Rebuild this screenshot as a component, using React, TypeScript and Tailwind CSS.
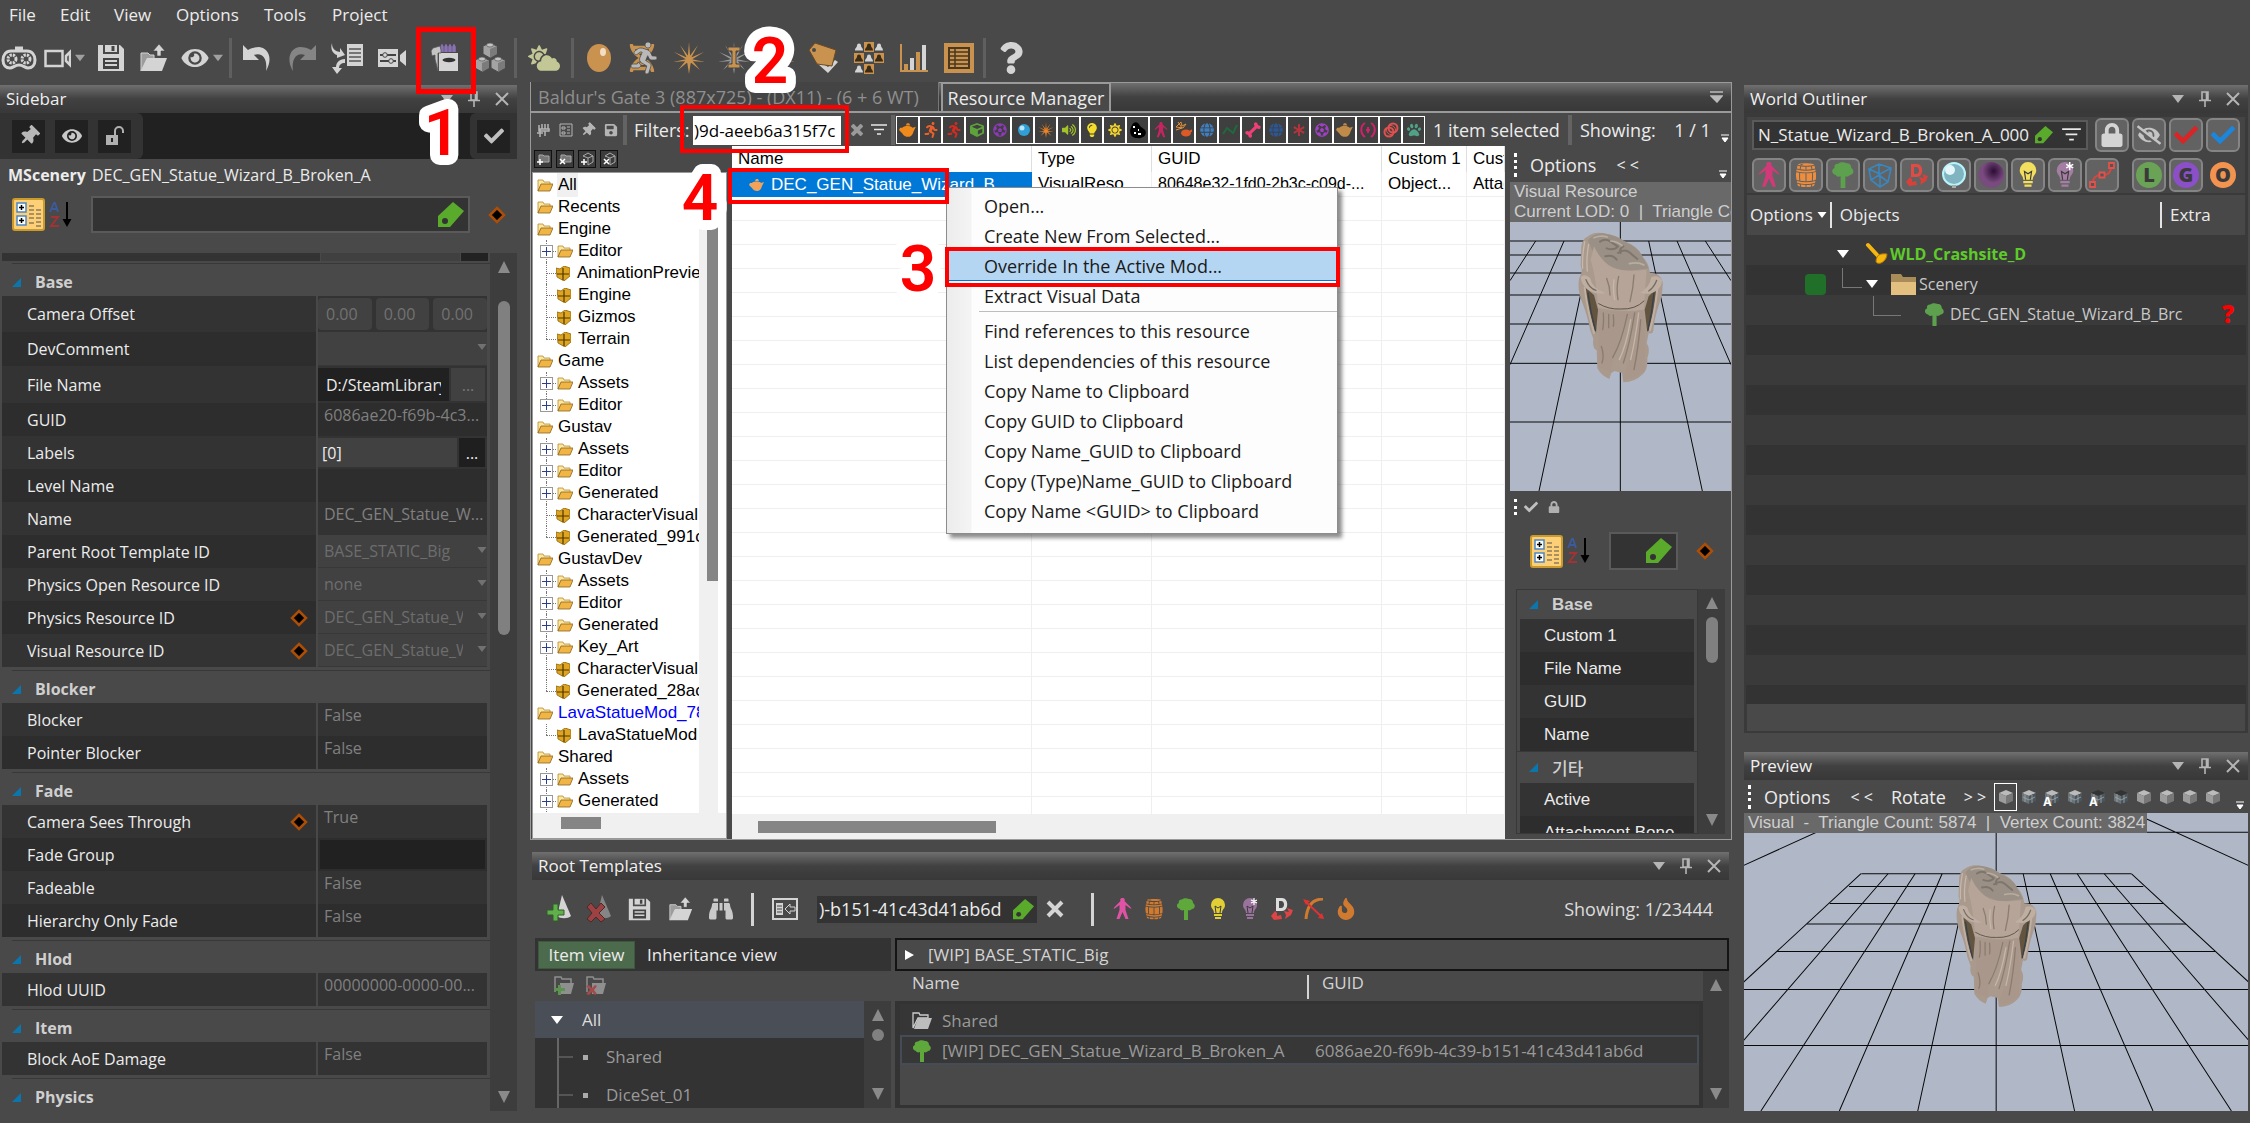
import React from "react";
import {
  FaAsterisk, FaBinoculars, FaBone, FaCheck, FaCloudSun, FaCube, FaDna, FaEye, FaEyeSlash, FaFire, FaFutbol, FaGlobe,
  FaLightbulb, FaLock, FaQuestion, FaRunning, FaSave, FaSun, FaThumbtack, FaUnlock, FaVolumeUp, FaPaw,
} from "react-icons/fa";
import { GiBarrel } from "react-icons/gi";

type Kids = { children?: React.ReactNode };

/* ---------- icons ---------- */

function Svg({ children, className = "size-7", box = "0 0 28 28" }: Kids & { className?: string; box?: string }) {
  return (
    <svg viewBox={box} className={`${className} shrink-0`} fill="none" aria-hidden="true">
      {children}
    </svg>
  );
}

const Down = ({ className = "h-2 w-3 text-[#b5b5b5]" }: { className?: string }) => (
  <Svg box="0 0 12 8" className={className}><path d="M0 0h12L6 8z" fill="currentColor" /></Svg>
);
const Up = () => <Svg box="0 0 12 12" className="size-3 text-[#8a8a8a]"><path d="M0 12h12L6 0z" fill="currentColor" /></Svg>;
const DownBig = () => <Svg box="0 0 12 12" className="size-3 text-[#8a8a8a]"><path d="M0 0h12L6 12z" fill="currentColor" /></Svg>;

const Gamepad = () => (
  <Svg className="h-7 w-9" box="0 0 36 28">
    <path d="M10 7h16c5 0 8 4 8 9s-3 8-7 8c-3 0-5-3-9-3s-6 3-9 3c-4 0-7-3-7-8s3-9 8-9zM14 4h8" stroke="#d4d4d4" strokeWidth="3" />
    <circle cx="11" cy="15" r="4" stroke="#d4d4d4" strokeWidth="3" strokeDasharray="2.2 1" />
    <circle cx="25" cy="15" r="4" stroke="#d4d4d4" strokeWidth="3" strokeDasharray="2.2 1" />
  </Svg>
);
const Camera = () => (
  <Svg className="h-7 w-[27px]" box="0 0 27 28">
    <path d="M1.500 7h17v15h-17zM22 12l4-4v13l-4-4z" stroke="#d4d4d4" strokeWidth="2.500" />
  </Svg>
);
const Floppy = ({ className = "size-7" }: { className?: string }) => (
  <Svg className={className}>
    <path d="M1 1h5v9h16V1h1l4 4v22H1z" fill="#d4d4d4" />
    <path d="M8 1h12v7H8z" fill="#d4d4d4" /><path d="M14.500 2h3v5h-3z" fill="#444" />
    <path d="M6 14h16v11H6z" fill="#444" /><path d="M8 16h12v2H8zm0 4h12v2H8z" fill="#d4d4d4" />
  </Svg>
);
const OpenUp = ({ className = "size-7" }: { className?: string }) => (
  <Svg className={className}>
    <path d="M1 27V9h7l2 2h4v4H7z" fill="#9c9c9c" stroke="#d4d4d4" />
    <path d="M7 14h20l-5 13H1z" fill="#d4d4d4" />
    <path d="M17 12V7h-4l6-7 6 7h-4v5z" fill="#d4d4d4" stroke="#444" strokeWidth=".6" />
  </Svg>
);
const Undo = ({ flip = false }: { flip?: boolean }) => (
  <Svg className="h-7 w-8" box="0 0 32 28">
    <path transform={flip ? "translate(32 0) scale(-1 1)" : undefined} d="M2 1v15h16l-5-5c7-3 14 2 12 16 7-12 3-23-7-24-4 0-8 1-11 3z" fill={flip ? "#858585" : "#d4d4d4"} />
  </Svg>
);
const LinkDoc = () => (
  <Svg className="h-8 w-[34px]" box="0 0 34 32">
    <path d="M17 2h16v22H17z" fill="#d4d4d4" />
    <path d="M19 7h12M19 11h12M19 15h12M19 19h12" stroke="#555" strokeWidth="1.500" />
    <path d="M2 1c0 5 2 8 8 9V6l5 7-8 3v-3C3 12 0 7 2 1zM15 17c-6 0-9 4-9 8H2l5 7 5-6H9c0-3 2-5 6-5z" fill="#d4d4d4" />
  </Svg>
);
const CamSettings = () => (
  <Svg>
    <path d="M0 5h20v18H0zM22 11l6-5v16l-6-5z" fill="#d4d4d4" />
    <path d="M2 11h16M2 17h16" stroke="#444" strokeWidth="1.800" />
    <circle cx="7" cy="11" r="2.300" fill="#d4d4d4" stroke="#444" /><circle cx="13" cy="17" r="2.300" fill="#d4d4d4" stroke="#444" />
  </Svg>
);
const Crayons = () => (
  <Svg>
    <path d="M10 8V3l1-2 1 2v5M14 8V3l1-2 1 2v5M18 8V3l1-2 1 2v5M22 8V3l1-2 1 2v5" fill="#8a72b4" stroke="#8a72b4" strokeWidth="1.500" />
    <path d="M8 9h19v18H8z" fill="#d4d4d4" />
    <path d="M9 2L2 4 0 7l1 5 3-1v4l3 12V9h3V6z" fill="#c4c4c4" stroke="#555" strokeWidth=".8" />
    <ellipse cx="18" cy="16" rx="6.500" ry="2.200" fill="#333" />
  </Svg>
);
const Brick = ({ x, y }: { x: number; y: number }) => (
  <g transform={`translate(${x} ${y})`}>
    <path d="M0 4l7-3 7 3v8l-7 4-7-4z" fill="#a3a3a3" stroke="#4a4a4a" /><path d="M7 7v9l7-4V4z" fill="#7b7b7b" />
    <ellipse cx="7" cy="3" rx="3.500" ry="2" fill="#c4c4c4" stroke="#555" strokeWidth=".7" />
  </g>
);
const Bricks = () => <Svg className="h-8 w-[30px]" box="0 0 30 32"><Brick x={8} y={0} /><Brick x={0} y={14} /><Brick x={16} y={14} /></Svg>;

const Burst = ({ color = "#c9924f", className = "size-8", letter = false }: { color?: string; className?: string; letter?: boolean }) => (
  <Svg className={className} box="0 0 32 32">
    <path
      d="M16 0l1.200 15h-2.400zM25 3l-7 13-2-1zM7 3l9 12-2 1zM31 10l-13 8-1-2zM1 10l14 6-1 2zM32 20l-14-1v-2zM0 20l14-3v2zM27 28l-11-9 2-2zM5 28l9-11 2 2zM16 32l-2-13h4z"
      fill={letter ? "#999" : color}
    />
    <circle cx="16" cy="18" r="3.500" fill={letter ? "#999" : color} />
    {letter && <path d="M10 5h12v4h-4v13h4v4H10v-4h4V9h-4z" fill={color} stroke="#494949" />}
  </Svg>
);
const Sphere = () => (
  <Svg className="h-[30px] w-[26px]" box="0 0 26 30">
    <ellipse cx="13" cy="15" rx="12" ry="14" fill="#c9924f" /><ellipse cx="17" cy="9" rx="3" ry="4" fill="#f3dec3" />
  </Svg>
);
const TagPaper = () => (
  <Svg className="h-8 w-[31px]" box="0 0 31 32">
    <path d="M10 22l10 9 10-11-3-2-7 7-7-5z" fill="#d4d4d4" />
    <path d="M1 8l6-7 21 7-4 16-15-2z" fill="#c9924f" stroke="#6b4a24" /><circle cx="6" cy="8" r="2" fill="#494949" />
  </Svg>
);
const People = () => (
  <Svg className="h-8 w-[30px]" box="0 0 30 32">
    {[0, 1, 2].flatMap((r) => [0, 1, 2].map((c) => {
      const odd = (r + c) % 2 === 1;
      if (r === 2 && c === 2) return null;
      return (
        <g key={`${r}${c}`} transform={`translate(${c * 10} ${r * 11})`}>
          {odd && <path d="M0 0h10v10H0z" fill="#c9924f" />}
          <path d="M5 1.500a2 2 0 012 2c0 2 2 2 2 5H1c0-3 2-3 2-5a2 2 0 012-2z" fill={odd ? "#3b2c18" : "#d4d4d4"} />
        </g>
      );
    }))}
  </Svg>
);
const Chart = () => (
  <Svg>
    <path d="M1 0v27h27" stroke="#c9924f" strokeWidth="2" />
    <path d="M4 20h4v6H4zM16 8h4v18h-4z" fill="#c9924f" /><path d="M10 14h4v12h-4zM22 1h4v25h-4z" fill="#d4d4d4" />
  </Svg>
);
const Ledger = () => (
  <Svg className="size-[30px]" box="0 0 30 30">
    <path d="M0 0h30v30H0z" fill="#c9924f" /><path d="M4 4h22v22H4z" fill="#4a3820" />
    <path d="M6 6h18v18H6z" fill="#c9924f" /><path d="M6 9h18M6 13h18M6 17h18M6 21h18M11 6v18" stroke="#4a3820" strokeWidth="1.500" />
  </Svg>
);
const Pushpin = () => (
  <Svg box="0 0 14 16" className="h-4 w-3.5"><path d="M4 1h6v8H4zM1 9.500h12M7 10v6M8.500 1v8" stroke="#b5b5b5" strokeWidth="1.600" /></Svg>
);
const Cross = () => <Svg box="0 0 14 14" className="size-3.5"><path d="M1 1l12 12M13 1L1 13" stroke="#b5b5b5" strokeWidth="2" /></Svg>;
const Categorized = () => (
  <Svg className="size-[33px]" box="0 0 33 33">
    <rect x="1" y="1" width="31" height="31" rx="2" fill="#fdd078" stroke="#c99a2c" strokeWidth="2" />
    {[5, 18].map((y) => (
      <g key={y}><path d={`M5 ${y}h9v9H5z`} fill="#fff" stroke="#4a86c7" strokeWidth="1.500" /><path d={`M7 ${y + 4.5}h5M9.500 ${y + 2}v5`} stroke="#000" strokeWidth="1.500" /></g>
    ))}
    <path d="M17 8h5M17 12h5M17 16h5M17 20h5M17 25h5M24 12h5M24 16h5M24 20h5M24 24h5M24 28h5" stroke="#8d7b55" strokeWidth="1.500" />
  </Svg>
);
const SortAZ = () => (
  <Svg className="h-7 w-[25px]" box="0 0 25 28">
    <path d="M1 11L5 2h1l3 9M3 8h5" stroke="#3c5a9e" strokeWidth="1.800" /><path d="M2 16h7L2 25h8" stroke="#a03434" strokeWidth="2" />
    <path d="M18 1v22" stroke="#000" strokeWidth="2" /><path d="M13.500 18h9L18 26z" fill="#000" />
  </Svg>
);
const GreenTag = ({ className = "size-[26px]" }: { className?: string }) => (
  <Svg box="0 0 26 26" className={className}>
    <path d="M15 0l11 9-14 16H0V14z" fill="#5aab2c" /><circle cx="7" cy="19" r="3" fill="#333" />
  </Svg>
);
const Diamond = () => (
  <Svg box="0 0 18 18" className="size-[18px]"><path d="M9 2l7 7-7 7-7-7z" fill="#000" stroke="#ad4e07" strokeWidth="2.500" /></Svg>
);
const FilterLines = ({ className = "h-3 w-4" }: { className?: string }) => (
  <Svg box="0 0 16 12" className={className}><path d="M0 1h16M3 5.500h10M6 10h4" stroke="#e8e8e8" strokeWidth="1.500" /></Svg>
);
const Teapot = ({ className = "size-4", color = "#ef8a1c" }: { className?: string; color?: string }) => (
  <Svg box="0 0 16 16" className={className}>
    <path d="M3 6c1-2 8-2 9 0l3-1-2 4c-1 4-3 5-5 5s-4-1-5-3L0 8l1-2z" fill={color} /><path d="M6 4h4l-1-2H7z" fill={color} />
  </Svg>
);
const Folder = () => (
  <Svg box="0 0 16 14" className="h-3.5 w-4">
    <path d="M1 13V2h5l1 2h6v3H4z" fill="#fbe7a2" stroke="#b98a2a" strokeWidth=".8" />
    <path d="M4 6h12l-3 7H1z" fill="#f0b545" stroke="#8a6420" strokeWidth=".8" />
  </Svg>
);
const Pack = () => (
  <Svg box="0 0 14 15" className="h-[15px] w-3.5">
    <path d="M0 2l4 1 4-3 6 2v8l-6 5-7-4z" fill="#e0a520" stroke="#8c6206" strokeWidth=".8" />
    <path d="M7 2v12M1 8h12" stroke="#4c3702" strokeWidth="1.200" />
  </Svg>
);
const TreeIcon = ({ color, className = "h-[22px] w-[18px]" }: { color: string; className?: string }) => (
  <Svg box="0 0 18 22" className={className}>
    <path d="M5 1.500C7-.3 10 0 12 1c3 0 4 2 4 4 3 2 2 6-1 6-1 1-3 2-4 1v10H7V12c-2 1-4 0-4-1-4-1-4-5-1-6-1-2 1-4 3-3.500z" fill={color} />
  </Svg>
);
const Person = ({ color, className = "h-[22px] w-[19px]" }: { color: string; className?: string }) => (
  <Svg box="0 0 19 22" className={className}>
    <path d="M9.500 0a2 2 0 012 3l6 6 1 2-2-1-4-3v5l3 9h-3l-3-7-3 7h-3l3-9V7l-4 3-2 1 1-2 6-6a2 2 0 012-3z" fill={color} />
  </Svg>
);
const Bulb = ({ color, star = false, className = "h-[22px] w-4" }: { color: string; star?: boolean; className?: string }) => (
  <Svg box="0 0 16 22" className={className}>
    <path d="M8 0a7 7 0 017 7c0 4-3 4-3 8H4c0-4-3-4-3-8a7 7 0 017-7zM4 16h8v2H4zM5 19h6v2H5z" fill={color} />
    <path d="M6 15l-1-7 3 2 3-2-1 7" stroke="#3b3b3b" />
    {star && <path d="M12 0v7M9 2l6 3M15 2L9 5" stroke="#fff" strokeWidth="1.200" />}
  </Svg>
);
const Decal = ({ color = "#d44", letter = "#ddd" }: { color?: string; letter?: string }) => (
  <Svg box="0 0 24 24" className="size-6">
    <path d="M6 1h6c7 0 7 13 0 13H6zm3 3v7h2c4 0 4-7 0-7z" fill={letter} fillRule="evenodd" />
    <path d="M5 14l-4 5 3 4 8-1-1-4-4 1v-3zM14 14l5 1-2-4 6 2-2 5-6 4 1-4z" fill={color} />
  </Svg>
);
const Curve = () => (
  <Svg box="0 0 26 26" className="size-[26px]">
    <path d="M4 21c0-6 3-8 9-8s9-2 9-8" stroke="#d8473f" strokeWidth="2" />
    <path d="M1 20h5v5H1zM10.500 10.500h5v5h-5zM20 1h5v5h-5z" fill="#555" stroke="#e2524a" strokeWidth="1.800" />
  </Svg>
);
const Arrow = () => (
  <Svg box="0 0 22 22" className="size-[22px]">
    <path d="M20 1C10 1 4 8 3 21" stroke="#cf7a2e" strokeWidth="3" /><path d="M2 3l18 17" stroke="#d33" strokeWidth="2" /><path d="M0 1l7 2-4 4zM21 21l-6-1 4-5z" fill="#d33" />
  </Svg>
);
const Cone = ({ add = false }: { add?: boolean }) => (
  <Svg className="h-7 w-[26px]" box="0 0 26 28">
    <path d="M16 0l9 21c-3 3-11 3-14 0z" fill={add ? "#d4d4d4" : "#858585"} />
    {add ? <path d="M7 9h5v6h6v5h-6v6H7v-6H1v-5h6z" fill="#5fb04a" stroke="#335c28" /> : <path d="M1 12l4-4 5 6 5-6 4 4-6 6 6 6-4 3-5-5-5 5-4-3 5-6z" fill="#9c4242" stroke="#4e2828" />}
  </Svg>
);
const FolderOp = ({ add = false }: { add?: boolean }) => (
  <Svg className="h-5 w-[22px]" box="0 0 22 20">
    <path d="M2 16V1h6l1 2h9v4" stroke="#8f8f8f" strokeWidth="1.500" /><path d="M7 7h14l-3 11H7z" fill="#8f8f8f" />
    {add ? <path d="M5 9h3v3h4v3H8v4H5v-4H1v-3h4z" fill="#5a9450" /> : <path d="M1 10l3-1 3 3 3-3 2 1-3 4 3 4-2 1-3-3-3 3-3-1 4-4z" fill="#a34a4a" />}
  </Svg>
);
const WireCube = ({ color }: { color: string }) => (
  <Svg box="0 0 26 26" className="size-[26px]"><path d="M2 7l10-5 12 4-3 14-8 5L4 18zM2 7l11 5 11-6M13 12v13M12 2v11l-8 5M12 13l9 7" stroke={color} strokeWidth="1.600" /></Svg>
);
const Plug = () => (
  <Svg box="0 0 14 14" className="size-3.5"><path d="M3 2v4M6 1v5M9 1v5M12 1v5M3 6h10v2H3zM9 8v5M4 6v8M1 10h6" stroke="#b5b5b5" strokeWidth="1.500" /></Svg>
);
const Grip = () => <span className="h-6 w-1 shrink-0 border-l-3 border-dotted border-white" />;
const Overflow = ({ className = "" }: { className?: string }) => (
  <Svg box="0 0 8 8" className={`size-2 self-end ${className}`}><path d="M0 1h8M1 4h6L4 8z" stroke="#fff" fill="#fff" /></Svg>
);

/* ---------- shared pieces ---------- */

function TitleBar({ title }: { title: string }) {
  return (
    <header className="flex h-7 shrink-0 items-center gap-3.5 bg-linear-to-b from-[#707070] via-[#414141] to-[#383838] pr-2 pl-1.5 text-[#f0f0f0]">
      <h2 className="flex-1">{title}</h2>
      <button aria-label={`${title} menu`}><Down /></button>
      <button aria-label={`Pin ${title}`}><Pushpin /></button>
      <button aria-label={`Close ${title}`}><Cross /></button>
    </header>
  );
}

/* Numbered step marker with a thick rounded outline. */
const Digit = ({ className, children }: Kids & { className: string }) => (
  <svg viewBox="0 0 56 66" className={`pointer-events-none absolute z-30 h-[66px] w-14 overflow-visible font-[Roboto,sans-serif] text-[64px] font-semibold ${className}`}>
    <text x="28" y="55" textAnchor="middle" fill="#f00" stroke="#fff" strokeWidth="20" strokeLinejoin="round" paintOrder="stroke">{children}</text>
  </svg>
);
const RedBox = ({ className }: { className: string }) => <span className={`pointer-events-none absolute z-20 border-4 border-[#f00] ${className}`} />;

function Scroll({ thumb, className = "" }: { thumb: string; className?: string }) {
  return (
    <div className={`flex shrink-0 flex-col items-center bg-[#3d3d3d] py-2 ${className}`}>
      <Up />
      <span className={`mt-2 w-3 rounded-full bg-[#808080] ${thumb}`} />
      <span className="flex-1" />
      <DownBig />
    </div>
  );
}

/* ---------- menu and toolbar ---------- */

const MENU = [["File", "w-[51px]"], ["Edit", "w-[54px]"], ["View", "w-[62px]"], ["Options", "w-[88px]"], ["Tools", "w-[68px]"], ["Project", "w-20"]];

const Tool = ({ name, children, className = "w-[45px]" }: Kids & { name: string; className?: string }) => (
  <button aria-label={name} className={`relative flex h-full shrink-0 items-center justify-center gap-1 ${className}`}>{children}</button>
);
const Bar = ({ className = "mx-0.5 h-10 w-[3px] bg-[#5f5f5f]" }: { className?: string }) => <span className={`shrink-0 ${className}`} />;

function Toolbar() {
  return (
    <div className="flex h-[52px] items-center pt-1">
      <Tool name="Game mode" className="w-[37px]"><Gamepad /></Tool>
      <Tool name="Camera" className="w-[54px]"><Camera /><Down className="h-2.5 w-2.5 text-[#a0a0a0]" /></Tool>
      <Tool name="Save" className="w-10"><Floppy /></Tool>
      <Tool name="Open" className="w-[46px]"><OpenUp /></Tool>
      <Tool name="Visibility" className="w-[50px]"><FaEye className="h-6 w-7 text-[#d4d4d4]" /><Down className="h-2.5 w-2.5 text-[#a0a0a0]" /></Tool>
      <Bar />
      <Tool name="Undo"><Undo /></Tool>
      <Tool name="Redo"><Undo flip /></Tool>
      <Tool name="Relink"><LinkDoc /></Tool>
      <Tool name="Camera settings"><CamSettings /></Tool>
      <Tool name="Resource Manager" className="ml-2 w-[45px]">
        <Crayons />
        <span className="pointer-events-none absolute -top-[7px] -left-1.5 z-20 h-[67px] w-[60px] border-[5px] border-[#f00]" />
        <Digit className="top-[66px] -left-2">1</Digit>
      </Tool>
      <Tool name="Root Templates"><Bricks /></Tool>
      <Bar />
      <Tool name="Atmosphere" className="w-[50px]"><FaCloudSun className="size-8 text-[#c3c795]" /></Tool>
      <Bar />
      <Tool name="Materials"><Sphere /></Tool>
      <Tool name="Animation"><Svg className="size-8" box="0 0 32 32"><FaDna size={28} x={0} y={2} color="#c9924f" /><FaRunning size={32} color="#b9b9b9" stroke="#494949" strokeWidth={12} /></Svg></Tool>
      <Tool name="Effects"><Burst /></Tool>
      <Tool name="Effect instances"><Burst letter /></Tool>
      <Tool name="Scripts"><Burst /><Digit className="-top-1.5 -left-3.5">2</Digit></Tool>
      <Tool name="Tags"><TagPaper /></Tool>
      <Tool name="Characters"><People /></Tool>
      <Tool name="Statistics"><Chart /></Tool>
      <Tool name="Ledger"><Ledger /></Tool>
      <Bar />
      <Tool name="Help"><FaQuestion className="h-9 w-6 text-[#d4d4d4]" /></Tool>
    </div>
  );
}

/* ---------- sidebar ---------- */

const Section = ({ title, className = "h-9" }: { title: string; className?: string }) => (
  <h3 className={`flex shrink-0 items-end pb-0.5 pl-3 ${className}`}>
    <span className="flex flex-1 items-center gap-3.5 border-t border-[#383838] pt-1.5 font-bold text-[#cfcfcf]">
      <Svg box="0 0 9 9" className="size-[9px]"><path d="M9 0v9H0z" fill="#0b76ad" /></Svg>
      {title}
    </span>
  </h3>
);

type Row = { label: string; value?: string; kind?: "select" | "vector" | "file" | "labels" | "input" | "combo"; mark?: boolean };
const SECTIONS: { title: string; rows: Row[] }[] = [
  {
    title: "Base",
    rows: [
      { label: "Camera Offset", kind: "vector" },
      { label: "DevComment", kind: "combo" },
      { label: "File Name", kind: "file", value: "D:/SteamLibrary" },
      { label: "GUID", value: "6086ae20-f69b-4c3..." },
      { label: "Labels", kind: "labels", value: "[0]" },
      { label: "Level Name" },
      { label: "Name", value: "DEC_GEN_Statue_W..." },
      { label: "Parent Root Template ID", kind: "select", value: "BASE_STATIC_Big" },
      { label: "Physics Open Resource ID", kind: "select", value: "none" },
      { label: "Physics Resource ID", kind: "select", value: "DEC_GEN_Statue_W", mark: true },
      { label: "Visual Resource ID", kind: "select", value: "DEC_GEN_Statue_W", mark: true },
    ],
  },
  { title: "Blocker", rows: [{ label: "Blocker", value: "False" }, { label: "Pointer Blocker", value: "False" }] },
  {
    title: "Fade",
    rows: [
      { label: "Camera Sees Through", value: "True", mark: true },
      { label: "Fade Group", kind: "input" },
      { label: "Fadeable", value: "False" },
      { label: "Hierarchy Only Fade", value: "False" },
    ],
  },
  { title: "Hlod", rows: [{ label: "Hlod UUID", value: "00000000-0000-00..." }] },
  { title: "Item", rows: [{ label: "Block AoE Damage", value: "False" }] },
  { title: "Physics", rows: [] },
];

const ROW_HEIGHT: Record<string, string> = { vector: "h-9", combo: "h-[34px]", file: "h-[37px]" };

function Value({ row, id }: { row: Row; id: string }) {
  const { kind, value } = row;
  if (kind === "vector")
    return (
      <div className="flex h-full gap-1 py-0.5">
        {["X", "Y", "Z"].map((axis) => (
          <input key={axis} id={axis === "X" ? id : undefined} aria-label={`Camera Offset ${axis}`} defaultValue="0.00" className="min-w-0 flex-1 rounded-sm bg-[#414141] pl-2 text-[#727272]" />
        ))}
      </div>
    );
  if (kind === "select" || kind === "combo")
    return (
      <div className="relative h-full border-b border-[#383838] bg-[#414141]">
        <select id={id} className="size-full appearance-none overflow-hidden pr-6 pl-1.5 text-[#6d6d6d]"><option>{value ?? ""}</option></select>
        <Down className="pointer-events-none absolute top-3 right-0 h-1.5 w-2.5 text-[#717171]" />
      </div>
    );
  if (kind === "file" || kind === "labels") {
    const file = kind === "file";
    return (
      <div className="flex h-full gap-0.5 py-0.5 pr-0.5">
        <input id={id} defaultValue={value} className={`min-w-0 flex-1 text-[#ececec] ${file ? "bg-[#212121] px-2" : "bg-[#414141] px-1"}`} />
        <button aria-label={`Browse ${row.label}`} className={file ? "w-[34px] bg-[#414141] text-[#777]" : "w-[26px] bg-[#1f1f1f] text-[#eee]"}>...</button>
      </div>
    );
  }
  if (kind === "input") return <div className="h-full p-0.5"><input id={id} className="size-full bg-[#212121]" /></div>;
  return <output id={id} className="block overflow-hidden pl-1.5 whitespace-nowrap text-[#808080]">{value}</output>;
}

function Sidebar() {
  return (
    <aside className="mt-[3px] mb-3 flex w-[517px] shrink-0 flex-col">
      <TitleBar title="Sidebar" />
      <div className="flex h-[46px] shrink-0 justify-between bg-[#212121]">
        <div className="flex items-center gap-2.5 rounded-r-md bg-[#333] px-3">
          <button aria-label="Pin selection" className="grid size-[33px] place-items-center bg-[#212121]"><FaThumbtack className="size-5 rotate-45 text-[#b8b8b8]" /></button>
          <button aria-label="Show selection" className="grid size-[33px] place-items-center bg-[#212121]"><FaEye className="size-5 text-[#c8c8c8]" /></button>
          <button aria-label="Unlock selection" className="grid size-[33px] place-items-center bg-[#212121]">
            <Svg box="0 0 20 20" className="size-5"><path d="M1 9h12v10H1z" fill="#b0b0b0" /><path d="M10 9V5a4 4 0 018 0v2" stroke="#b0b0b0" strokeWidth="2" /><path d="M6 12h2v4H6z" fill="#222" /></Svg>
          </button>
        </div>
        <div className="flex items-center rounded-l-md bg-[#333] px-[7px]">
          <button aria-label="Apply" className="grid size-[33px] place-items-center bg-[#212121]"><FaCheck className="size-5 text-[#c0c0c0]" /></button>
        </div>
      </div>
      <p className="flex h-8 shrink-0 items-center gap-1.5 pl-2 text-base"><b>MScenery</b> DEC_GEN_Statue_Wizard_B_Broken_A</p>
      <div className="mt-[5px] flex h-[37px] shrink-0 items-center pl-3">
        <button aria-label="Categorized"><Categorized /></button>
        <button aria-label="Sort alphabetically" className="ml-1"><SortAZ /></button>
        <label className="ml-[17px] flex h-full flex-1 items-center border-2 border-[#5a5a5a] bg-[#333] pr-1">
          <input aria-label="Filter properties" className="min-w-0 flex-1" /><GreenTag />
        </label>
        <span className="mr-[11px] ml-[18px]"><Diamond /></span>
      </div>
      <div className="mt-5 flex min-h-0 flex-1">
        <div className="min-w-0 flex-1 overflow-hidden text-base">
          <div className="flex h-2 gap-px px-0.5"><span className="flex-1 bg-[#333]" /><span className="w-[139px] bg-[#404040]" /><span className="w-[27px] bg-[#222]" /></div>
          {SECTIONS.map((s) => (
            <section key={s.title}>
              <Section title={s.title} className={s.title === "Base" ? "h-[35px]" : "h-9"} />
              <div className="ml-0.5 mr-[3px]">
                {s.rows.map((r, i) => {
                  const id = `prop-${s.title}-${i}`;
                  return (
                    <div key={r.label} className={`flex ${ROW_HEIGHT[r.kind ?? ""] ?? "h-[33px]"} ${i % 2 ? "bg-[#2d2d2d]" : "bg-[#333]"}`}>
                      <label htmlFor={id} className="flex min-w-0 flex-1 items-center justify-between pr-2 pl-[25px]">{r.label}{r.mark && <Diamond />}</label>
                      <div className="w-[171px] border-l-2 border-[#484848]"><Value row={r} id={id} /></div>
                    </div>
                  );
                })}
              </div>
            </section>
          ))}
        </div>
        <Scroll className="w-[27px]" thumb="mt-7 h-[334px]" />
      </div>
    </aside>
  );
}

/* ---------- resource manager ---------- */

const FILTERS: [string, React.ReactNode][] = [
  ["Visual", <Teapot className="size-[18px]" />],
  ["Animation", <FaRunning className="size-4 text-[#e8602c]" />],
  ["Animation set", <FaRunning className="size-4 text-[#d02c22]" />],
  ["Terrain", <FaCube className="size-3.5 text-[#5ea23c]" />],
  ["Physics", <FaFutbol className="size-3.5 text-[#8c3ab8]" />],
  ["Material", <Svg box="0 0 16 16" className="size-4"><circle cx="9" cy="8" r="6" fill="#2f9fd6" /><circle cx="7" cy="6" r="2.500" fill="#b7e6fb" /></Svg>],
  ["Effect", <Burst className="size-4" color="#ea8427" />],
  ["Sound", <FaVolumeUp className="size-3.5 text-[#a4c22a]" />],
  ["Light", <FaLightbulb className="size-3.5 text-[#f4dc2a]" />],
  ["Lighting", <FaSun className="size-3.5 text-[#f4d52a]" />],
  ["Atmosphere", <Svg box="0 0 18 18" className="size-[18px]"><path d="M3 4c3-5 7-2 8 1l5 4c3 5-3 9-8 8-6 0-9-6-5-13z" fill="#000" /><path d="M5 12h2M9 13h3M9 9h1M4 6h2" stroke="#fff" strokeWidth="2" /></Svg>],
  ["Skeleton", <Person className="size-4" color="#c4245f" />],
  ["Cloth", <Svg box="0 0 16 16" className="size-4"><path d="M5 0l1 4 4-2-3 4-7-1zM2 0l4 6M0 8l6-2" stroke="#e2903a" /><ellipse cx="10" cy="11" rx="5" ry="3.500" fill="#dd5a26" /><path d="M14 10l2-2" stroke="#dd5a26" strokeWidth="2" /></Svg>],
  ["Mesh proxy", <FaGlobe className="size-3.5 text-[#3f7fc0]" />],
  ["Timeline", <Svg box="0 0 16 16" className="size-4"><path d="M1 12l4-6 6 5 4-8" stroke="#1f6a3c" strokeWidth="2" /></Svg>],
  ["Skeleton rig", <FaBone className="size-4 -rotate-45 text-[#ee3f77]" />],
  ["Virtual texture", <FaGlobe className="size-3.5 text-[#2c5796]" />],
  ["Blend space", <FaAsterisk className="size-3 text-[#b8343c]" />],
  ["Physics shape", <FaFutbol className="size-3.5 text-[#a040c4]" />],
  ["Bank", <Teapot className="size-[18px]" color="#c08a48" />],
  ["Script", <Svg box="0 0 16 16" className="size-4"><path d="M5 1C0 4 0 11 5 15M11 1c5 3 5 10 0 14M8 5v6M6 8h4" stroke="#d4206a" strokeWidth="2" /></Svg>],
  ["Diffusion", <Svg box="0 0 16 16" className="size-4"><circle cx="6" cy="10" r="4.500" stroke="#e0504f" strokeWidth="2" /><circle cx="10" cy="6" r="4.500" stroke="#e0504f" strokeWidth="2" /><circle cx="8" cy="8" r="4.500" stroke="#e0504f" /></Svg>],
  ["Creature", <FaPaw className="size-3.5 text-[#4fa287]" />],
];

type Node = [name: string, kind: "root" | "dir" | "pack", last?: boolean];
const TREE: Node[] = [
  ["All", "root"], ["Recents", "root"], ["Engine", "root"], ["Editor", "dir"], ["AnimationPrevie", "pack"], ["Engine", "pack"], ["Gizmos", "pack"], ["Terrain", "pack", true],
  ["Game", "root"], ["Assets", "dir"], ["Editor", "dir", true], ["Gustav", "root"], ["Assets", "dir"], ["Editor", "dir"], ["Generated", "dir"], ["CharacterVisual", "pack"], ["Generated_991c", "pack", true],
  ["GustavDev", "root"], ["Assets", "dir"], ["Editor", "dir"], ["Generated", "dir"], ["Key_Art", "dir"], ["CharacterVisual", "pack"], ["Generated_28ac", "pack", true],
  ["LavaStatueMod_78", "root"], ["LavaStatueMod", "pack", true], ["Shared", "root"], ["Assets", "dir"], ["Generated", "dir"],
];

function ResourceTree() {
  return (
    <div className="flex w-[195px] shrink-0 flex-col">
      <div className="flex h-[26px] items-center gap-1 pl-0.5">
        {["Add folder", "Remove folder", "Add package", "Remove package"].map((n, i) => (
          <button key={n} aria-label={n} className="grid size-[18px] place-items-center border border-[#111] bg-[#3c3c3c]">
            <Svg box="0 0 14 14" className="size-3.5">
              {i < 2 ? <path d="M3 3h4l1 1h5v6H3z" stroke="#aaa" fill="#777" /> : <path d="M3 4l5-3 5 3v6l-5 3M3 4l5 2 5-2M8 6v7" stroke="#aaa" />}
              <path d={i % 2 ? "M2 7l5 5M7 7l-5 5" : "M4 7v6M1 10h6"} stroke="#fff" strokeWidth="1.500" />
            </Svg>
          </button>
        ))}
      </div>
      <div className="relative flex min-h-0 flex-1 flex-col border border-[#999] bg-white">
        <Digit className="-top-2 left-[139px]">4</Digit>
        <div className="flex min-h-0 flex-1">
          <ul className="min-w-0 flex-1 overflow-hidden pt-px font-['Liberation_Sans',sans-serif] whitespace-nowrap text-black">
            {TREE.map(([name, kind, last], i) => (
              <li key={i} className="flex h-[22px] items-center">
                {kind === "root" ? (
                  <span className="ml-1 flex"><Folder /></span>
                ) : (
                  <>
                    <span className="relative ml-[7px] flex h-full w-[17px] items-center">
                      <span className={`absolute top-0 left-1.5 border-l border-dotted border-[#777] ${last ? "h-1/2" : "h-full"}`} />
                      <span className="ml-1.5 w-2.5 border-t border-dotted border-[#777]" />
                      {kind === "dir" && <button aria-label={`Expand ${name}`} className="absolute left-0 grid size-[13px] place-items-center border border-[#999] bg-white"><Svg box="0 0 9 9" className="size-[9px]"><path d="M0 4.500h9M4.500 0v9" stroke="#2c3f8f" /></Svg></button>}
                    </span>
                    {kind === "dir" ? <Folder /> : <Pack />}
                  </>
                )}
                <span className={`px-px ${kind === "pack" ? "ml-1.5" : "ml-1"} ${name === "All" ? "bg-[#f0f0f0]" : ""} ${name === "LavaStatueMod_78" ? "text-[#00f]" : ""}`}>{name}</span>
              </li>
            ))}
          </ul>
          <div className="w-[19px] bg-[#f0f0f0] pl-2"><div className="h-[408px] w-[11px] bg-[#858585]" /></div>
          <div className="w-2 bg-white" />
        </div>
        <div className="flex h-[25px] items-start bg-[#f0f0f0] pt-1 pl-7"><span className="h-3 w-10 bg-[#858585]" /></div>
      </div>
    </div>
  );
}

const MENU_ITEMS = [
  "Open...", "Create New From Selected...", "Override In the Active Mod...", "Extract Visual Data", "Find references to this resource", "List dependencies of this resource",
  "Copy Name to Clipboard", "Copy GUID to Clipboard", "Copy Name_GUID to Clipboard", "Copy (Type)Name_GUID to Clipboard", "Copy Name <GUID> to Clipboard",
];

function ContextMenu() {
  return (
    <ul role="menu" className="absolute top-[41px] left-[214px] z-10 h-[347px] w-[392px] border border-[#8c8c8c] bg-[#fdfdfd] bg-linear-to-r from-[#ececec] from-[0px] via-[#f4f4f4] via-[24px] to-[#fdfdfd] to-[25px] py-[3px] text-lg text-[#1a1a1a] shadow-[4px_4px_4px_rgba(0,0,0,0.45)]">
      {MENU_ITEMS.map((t, i) => (
        <li key={t} role="none" className={i === 3 ? "mb-1" : i === 2 ? "relative" : ""}>
          <button role="menuitem" className={`block h-[30px] w-full pl-[37px] text-left ${i === 2 ? "border-b border-[#0078d7] bg-[#b4d6f3]" : ""}`}>{t}</button>
          {i === 2 && <><RedBox className="-top-1 -left-0.5 h-10 w-[395px]" /><Digit className="-top-[15px] -left-[57px]">3</Digit></>}
          {i === 3 && <span className="ml-8 block border-t border-[#bdbdbd]" />}
        </li>
      ))}
    </ul>
  );
}

function ResourceList() {
  const cell = "overflow-hidden border-r border-b border-[#efefef] px-1.5 whitespace-nowrap";
  return (
    <div className="relative ml-[5px] flex min-w-0 flex-1 flex-col bg-white font-['Liberation_Sans',sans-serif] text-black">
      <div className="min-h-0 flex-1 overflow-hidden">
        <table className="w-full table-fixed border-separate border-spacing-0">
          <colgroup><col className="w-[300px]" /><col className="w-[120px]" /><col className="w-[230px]" /><col className="w-[85px]" /><col /></colgroup>
          <thead>
            <tr className="h-[26px] text-left">
              {["Name", "Type", "GUID", "Custom 1", "Custom 2"].map((h) => <th key={h} className="overflow-hidden border-r border-[#dedede] px-1.5 font-normal whitespace-nowrap">{h}</th>)}
            </tr>
          </thead>
          <tbody>
            <tr className="h-6">
              <td className="overflow-hidden bg-[#0078d7] pl-[17px] whitespace-nowrap text-white"><span className="flex items-center gap-1.5"><Teapot color="#f2a35a" /> DEC_GEN_Statue_Wizard_B</span></td>
              <td className={cell}>VisualReso</td><td className={`${cell} text-base`}>80648e32-1fd0-2b3c-c09d-...</td><td className={cell}>Object...</td><td className={cell}>Attachment</td>
            </tr>
            {Array.from({ length: 27 }, (_, i) => <tr key={i} className="h-6">{[0, 1, 2, 3, 4].map((c) => <td key={c} className={cell} />)}</tr>)}
          </tbody>
        </table>
      </div>
      <div className="flex h-[25px] items-center bg-[#f0f0f0] pl-[26px]"><span className="h-3 w-[238px] bg-[#858585]" /></div>
      <RedBox className="top-[22px] -left-1 h-9 w-[221px]" />
      <div className="font-['Open_Sans',sans-serif]"><ContextMenu /></div>
    </div>
  );
}

/* Broken wizard statue, centred on x = 841 in its own units. */
function Statue() {
  return (
    <g strokeLinecap="round" strokeLinejoin="round">
      <path d="M724 498Q730 474 742 471Q760 456 786 460Q830 466 852 484Q896 500 908 532Q926 548 930 580Q960 578 968 606Q970 640 958 672Q944 710 940 752Q938 766 926 760L920 790Q932 808 922 836Q924 870 908 884Q884 908 850 908L846 880L824 874L814 880L808 898Q784 888 772 866L770 812Q756 806 760 778L750 750Q742 706 728 672Q710 630 718 594Q730 574 722 560Z" fill="#a99a8d" />
      <path d="M744 482Q760 460 790 461Q836 468 856 488Q896 504 908 532L926 566L850 576Q820 560 790 552Q760 530 744 482Z" fill="#9b9085" />
      <path d="M780 486q16-12 32 0t22 14q-12 14-34 6M834 520q20-14 34-2t24 20M796 530q22-6 34 10M850 500q-14 8-8 20" stroke="#7e766d" strokeWidth="6" />
      <path d="M762 474q20-8 40-2M812 484q22 2 34 14M868 552q26-6 44 4" stroke="#b8ada1" strokeWidth="5" />
      <path d="M762 500Q782 544 820 566Q860 578 920 570Q916 620 912 690Q860 700 774 684Q770 600 752 540Z" fill="#b5a497" />
      <path d="M734 622L762 646L774 690L768 760Q748 712 734 622ZM950 626L926 650L914 690L922 758Q944 700 950 626Z" fill="#63543f" />
      <path d="M744 640Q752 700 766 752M942 640Q936 700 924 752" stroke="#38404a" strokeWidth="4" />
      <path d="M734 624Q744 700 762 760M952 626Q944 700 930 752" stroke="#bfb0a3" strokeWidth="6" />
      <path d="M722 592Q734 580 750 594Q756 626 796 640Q770 646 744 630Q724 616 722 592ZM966 602Q956 584 934 592Q930 622 900 640Q934 648 952 630Q966 620 966 602Z" fill="#beafa2" />
      <path d="M738 600q10 26 30 32M950 602q-8 22-24 32" stroke="#786d62" strokeWidth="4" />
      <path d="M776 672Q806 690 842 688Q886 690 912 664" stroke="#5f554b" strokeWidth="3" />
      <path d="M774 690Q780 800 774 860L812 878Q822 800 862 720L884 760Q872 840 848 900Q886 900 912 872Q920 800 908 690Q850 704 774 690Z" fill="#a8978a" />
      <path d="M790 700q2 30-2 50M806 704v40M820 706q2 24 0 34M862 704q-16 80-44 130M884 700q-14 90-34 150M902 720q-6 80-20 150M836 590q-8 34-2 70M882 586q-2 40-12 80M800 596q10 26 10 50M784 800q10 30 2 50" stroke="#8a7c6f" strokeWidth="4" />
      <path d="M734 486q-8 44-6 80M746 494q-8 42-4 80M872 720q-14 80-34 120M896 700q-10 80-24 140M822 600q-4 30 2 60" stroke="#c6b7aa" strokeWidth="4" />
    </g>
  );
}

function GridLine({ d }: { d: string }) {
  return <path d={d} stroke="#080808" strokeWidth="3" />;
}

function PropertyTools() {
  return (
    <div className="flex h-[38px] items-center pl-5">
      <button aria-label="Categorized"><Categorized /></button>
      <button aria-label="Sort alphabetically" className="ml-1"><SortAZ /></button>
      <label className="ml-[17px] flex h-full w-[69px] items-center border-2 border-[#5a5a5a] bg-[#333] pr-1"><input aria-label="Filter resource properties" className="min-w-0 flex-1" /><GreenTag /></label>
      <span className="ml-[18px]"><Diamond /></span>
    </div>
  );
}

function ResourcePreview() {
  return (
    <div className="ml-[5px] flex w-[221px] shrink-0 flex-col overflow-hidden">
      <div className="flex h-9 shrink-0 items-center pt-0.5 pl-1 text-lg">
        <Grip /><button className="ml-3">Options</button><button className="ml-5 text-base">&lt; &lt;</button><Overflow className="mr-1 mb-1 ml-auto" />
      </div>
      <div className="h-10 shrink-0 overflow-hidden bg-[#696969] pl-1 font-['Liberation_Sans',sans-serif] leading-5 whitespace-pre text-[#cfcfcf]">
        <p>Visual Resource</p><p>{"Current LOD: 0  |  Triangle Count: 5874"}</p>
      </div>
      <svg viewBox="510 427 663 807" preserveAspectRatio="xMidYMid slice" className="h-[269px] w-full shrink-0 bg-[#b0b8c8]" fill="none">
        <GridLine d="M510 484h663M510 526h663M510 580h663M510 646h663M510 733h663M510 851h663M510 1027h663M841 427v807" />
        <GridLine d="M756 484L597 1234M926 484l161 750M672 484L510 855M1011 484l162 371M587 484L510 603M1096 484l77 119" />
        <Statue />
      </svg>
      <div className="flex h-8 shrink-0 items-center gap-1.5 pl-1"><span className="h-4 w-1 border-l-3 border-dotted border-white" /><FaCheck className="size-3.5 text-[#c0c0c0]" /><FaLock className="ml-1 size-3 text-[#b0b0b0]" /></div>
      <div className="mt-[9px] shrink-0"><PropertyTools /></div>
      <div className="mx-1.5 mt-[19px] mb-[5px] flex min-h-0 flex-1">
        <div className="min-w-0 flex-1 overflow-hidden border border-[#383838] font-['Liberation_Sans','Noto_Sans_CJK_KR',sans-serif]">
          {[{ t: "Base", r: ["Custom 1", "File Name", "GUID", "Name"] }, { t: "기타", r: ["Active", "Attachment Bone"] }].map((s, k) => (
            <section key={s.t}>
              <h3 className={`flex items-center gap-3.5 pl-3 text-[#cfcfcf] ${k ? "h-8 border-t border-[#383838] font-['Noto_Sans_CJK_KR',sans-serif] font-medium" : "h-[29px] font-bold"}`}><Svg box="0 0 9 9" className="size-[9px]"><path d="M9 0v9H0z" fill="#0b76ad" /></Svg>{s.t}</h3>
              <ul className="mx-[3px]">{s.r.map((r, i) => <li key={r} className={`flex h-[33px] items-center pl-6 whitespace-nowrap ${i % 2 ? "bg-[#2d2d2d]" : "bg-[#333]"}`}>{r}</li>)}</ul>
            </section>
          ))}
        </div>
        <Scroll className="w-[27px]" thumb="h-[46px]" />
      </div>
    </div>
  );
}

function ResourceManager() {
  const small = "size-3.5 text-[#b5b5b5]";
  return (
    <section className="flex min-h-0 flex-1 flex-col border border-[#9a9a9a]">
      <div role="tablist" className="flex h-[30px] shrink-0 items-end border-b-2 border-[#9a9a9a] bg-linear-to-b from-[#707070] via-[#414141] to-[#383838] text-lg">
        <button role="tab" aria-selected="false" className="h-[29px] w-[408px] border-r border-[#777] bg-[#444] pl-[7px] text-left whitespace-nowrap text-[#8f8f8f]">Baldur's Gate 3 (887x725) - (DX11) - (6 + 6 WT)</button>
        <button role="tab" aria-selected="true" className="ml-0.5 h-[29px] w-[170px] border-x-2 border-t-2 border-[#9a9a9a] bg-[#494949] whitespace-nowrap">Resource Manager</button>
        <button aria-label="Tab list" className="mr-2 mb-2 ml-auto"><Svg box="0 0 13 12" className="h-3 w-[13px]"><path d="M0 1h13M1 5h11l-5 6z" stroke="#bbb" strokeWidth="1.500" fill="#bbb" /></Svg></button>
      </div>
      <div className="flex h-[33px] shrink-0 items-center pt-px pl-[5px] text-lg">
        <div className="flex w-[82px] shrink-0 justify-between">
          <button aria-label="New resource"><Plug /></button>
          <button aria-label="Properties"><Svg box="0 0 14 14" className="size-3.5"><path d="M1 1h12v12H1zM3 4h3v2H3zM8 4h3M8 7h3M3 9h3v2H3zM8 10h3" stroke="#b5b5b5" /></Svg></button>
          <button aria-label="Pin filter"><FaThumbtack className={`${small} rotate-45`} /></button>
          <button aria-label="Save resource"><FaSave className={small} /></button>
        </div>
        <Bar className="mr-[7px] ml-[5px] h-[30px] w-1 bg-[#636363]" />
        <label htmlFor="filters" className="w-[59px] shrink-0">Filters:</label>
        <div className="relative">
          <input id="filters" defaultValue=")9d-aeeb6a315f7c" className="h-[29px] w-[148px] bg-white px-px text-[17px] text-black" />
          <RedBox className="-top-[11px] -left-[13px] h-12 w-[169px]" />
        </div>
        <button aria-label="Clear filter" className="ml-2.5"><Svg box="0 0 12 12" className="size-3"><path d="M1 1l10 10M11 1L1 11" stroke="#9a9a9a" strokeWidth="4" /></Svg></button>
        <button aria-label="Filter options" className="ml-2"><FilterLines /></button>
        <Bar className="mr-px ml-1 h-[30px] w-1 bg-[#636363]" />
        <div className="flex shrink-0">
          {FILTERS.map(([n, icon]) => <button key={n} aria-label={n} className="grid h-7 w-[23px] place-items-center border border-white bg-[#3f3f3f]">{icon}</button>)}
        </div>
        <span className="ml-2 whitespace-nowrap">1 item selected</span>
        <Bar className="mx-2 h-[30px] w-1 bg-[#636363]" />
        <span className="whitespace-pre">{"Showing:    1 / 1"}</span>
        <Overflow className="mr-0.5 mb-1 ml-auto" />
      </div>
      <div className="flex min-h-0 flex-1 pl-px">
        <ResourceTree /><ResourceList /><ResourcePreview />
      </div>
    </section>
  );
}

/* ---------- root templates ---------- */

function RootTemplates() {
  return (
    <section className="mt-3 mr-[3px] mb-[15px] ml-0.5 flex h-64 shrink-0 flex-col">
      <TitleBar title="Root Templates" />
      <div className="flex h-[58px] shrink-0 items-center pl-3.5 pr-4">
        <button aria-label="Add template"><Cone add /></button>
        <button aria-label="Delete template" className="ml-3.5"><Cone /></button>
        <button aria-label="Save templates" className="ml-4"><Floppy className="size-[23px]" /></button>
        <button aria-label="Export templates" className="ml-[18px]"><OpenUp className="size-6" /></button>
        <button aria-label="Find" className="ml-4"><FaBinoculars className="size-6 text-[#c9c9c9]" /></button>
        <Bar className="ml-[18px] h-[33px] w-[3px] bg-[#d4d4d4]" />
        <button aria-label="Collapse panel" className="ml-[18px]"><Svg box="0 0 26 22" className="h-[22px] w-[26px]"><path d="M1 1h24v20H1z" stroke="#d4d4d4" strokeWidth="2" /><path d="M4 5h7v12H4z" fill="#d4d4d4" /><path d="M5 8h5M5 11h5M5 14h5" stroke="#444" /><path d="M13 11l5-5v3h5v4h-5v3z" stroke="#d4d4d4" /></Svg></button>
        <label className="ml-[19px] flex h-[27px] w-[220px] items-center bg-[#333] pr-[3px] pl-0.5 text-lg"><input aria-label="Filter templates" defaultValue=")-b151-41c43d41ab6d" className="min-w-0 flex-1" /><GreenTag className="size-[21px]" /></label>
        <button aria-label="Clear template filter" className="ml-[9px]"><Svg box="0 0 18 18" className="size-[18px]"><path d="M2 2l14 14M16 2L2 16" stroke="#d4d4d4" strokeWidth="4" /></Svg></button>
        <Bar className="ml-[27px] h-[33px] w-[3px] bg-[#d4d4d4]" />
        <div className="ml-3 flex items-center">
          {([
            ["Characters", <Person color="#e052a4" />], ["Items", <GiBarrel className="size-6 text-[#cf7a2e]" />], ["Scenery", <TreeIcon color="#5fa83c" />], ["Lights", <Bulb color="#e2cf35" />],
            ["Light probes", <Bulb color="#9a739c" star />], ["Decals", <Decal />], ["Projectiles", <Arrow />], ["Surfaces", <FaFire className="size-[22px] text-[#cf7a2e]" />],
          ] as [string, React.ReactNode][]).map(([n, icon]) => <button key={n} aria-label={n} className="grid w-8 place-items-center">{icon}</button>)}
        </div>
        <span className="ml-auto text-lg text-[#dcdcdc]">Showing: 1/23444</span>
      </div>
      <div className="flex min-h-0 flex-1 gap-1 pl-[3px]">
        <div className="flex w-[356px] shrink-0 flex-col">
          <div role="tablist" className="flex h-[33px] shrink-0 items-center bg-[#333] pl-[3px]">
            <button role="tab" aria-selected="true" className="h-7 w-[97px] border border-[#3d583d] bg-[#4c6b4c]">Item view</button>
            <button role="tab" aria-selected="false" className="ml-3 h-7">Inheritance view</button>
          </div>
          <div className="flex h-[30px] shrink-0 items-center gap-2.5 pl-[18px]"><button aria-label="Add category"><FolderOp add /></button><button aria-label="Remove category"><FolderOp /></button></div>
          <div className="flex min-h-0 flex-1">
            <ul className="relative min-w-0 flex-1 overflow-hidden bg-[#333] text-[#9a9a9a]">
              <li className="flex h-[37px] items-center gap-[18px] bg-[#4a4e57] pl-[15px] text-[#ddd]"><Down className="h-2 w-3.5 text-white" />All</li>
              {["Shared", "DiceSet_01"].map((n) => (
                <li key={n} className="flex h-[38px] items-center pl-[22px]"><span className="-mt-px h-full border-l-2 border-[#666]" /><span className="w-3.5 border-t-2 border-[#555]" /><span className="ml-2.5 size-[5px] bg-[#aaa]" /><span className="ml-[18px]">{n}</span></li>
              ))}
            </ul>
            <Scroll className="w-[27px]" thumb="h-3" />
          </div>
        </div>
        <div className="flex min-w-0 flex-1 flex-col">
          <button className="flex h-[33px] shrink-0 items-center gap-3.5 border-2 border-[#141414] pl-2 text-[#d4d4d4]"><Svg box="0 0 9 10" className="h-2.5 w-[9px]"><path d="M0 0v10l9-5z" fill="#fff" /></Svg>[WIP] BASE_STATIC_Big</button>
          <div className="flex min-h-0 flex-1">
            <table className="block min-w-0 flex-1 bg-[#333]">
              <thead className="block bg-[#494949]"><tr className="flex h-[30px] text-left text-[#d4d4d4]"><th className="w-[412px] pl-[17px] font-normal">Name</th><th className="relative pl-[15px] font-normal"><span className="absolute top-1 left-0 h-6 border-l-2 border-[#d4d4d4]" />GUID</th></tr></thead>
              <tbody className="mt-[3px] mr-1 ml-[5px] block h-[101px] bg-[#494949] text-[#9a9a9a]">
                <tr className="flex h-[31px] items-center bg-[#363636] pt-0.5"><td className="flex items-center gap-2.5 pl-3"><Svg box="0 0 20 18" className="h-[18px] w-5"><path d="M1 16V1h6l1 2h8v3H6z" stroke="#ccc" strokeWidth="1.300" /><path d="M6 6h14l-4 11H2z" fill="#bdbdbd" /></Svg>Shared</td></tr>
                <tr className="flex h-[30px] items-center border-2 border-[#454c56] bg-[#373737] pt-0.5"><td className="flex w-[413px] items-center gap-[11px] pl-[11px]"><TreeIcon color="#5fa83c" /><span className="whitespace-nowrap">[WIP] DEC_GEN_Statue_Wizard_B_Broken_A</span></td><td className="whitespace-nowrap">6086ae20-f69b-4c39-b151-41c43d41ab6d</td></tr>
              </tbody>
            </table>
            <Scroll className="w-[26px]" thumb="h-0" />
          </div>
        </div>
      </div>
    </section>
  );
}

/* ---------- right column ---------- */

const RoundButton = ({ name, children, bare = false }: Kids & { name: string; bare?: boolean }) => (
  <button aria-label={name} className={`grid size-[34px] shrink-0 place-items-center rounded-md ${bare ? "" : "border-2 border-[#858585] bg-[#626262]"}`}>{children}</button>
);
const Letter = ({ c, className }: { c: string; className: string }) => <span className={`grid size-[26px] place-items-center rounded-full text-xl leading-none font-black text-[#3a3a3a] ${className}`}>{c}</span>;

function Outliner() {
  return (
    <section className="flex min-h-0 flex-1 flex-col bg-[#3a3a3a]">
      <TitleBar title="World Outliner" />
      <div className="mx-[3px] mt-1 flex h-[76px] shrink-0 flex-col justify-between bg-[#444] px-[5px] pt-px pb-px">
        <div className="flex items-center gap-[3px]">
          <label className="mr-1 flex h-[30px] min-w-0 flex-1 items-center border-2 border-[#5a5a5a] bg-[#333] pr-1 pl-1"><input aria-label="Filter objects" defaultValue="N_Statue_Wizard_B_Broken_A_000" className="min-w-0 flex-1" /><GreenTag className="ml-0.5 size-[18px]" /><FilterLines className="ml-2 h-3.5 w-[21px]" /></label>
          <RoundButton name="Lock"><FaLock className="size-6 text-[#d4d4d4]" /></RoundButton>
          <RoundButton name="Hide"><FaEyeSlash className="size-6 text-[#c4c4c4]" /></RoundButton>
          <RoundButton name="Apply red"><FaCheck className="size-6 text-[#d92525]" /></RoundButton>
          <RoundButton name="Apply blue"><FaCheck className="size-6 text-[#1b86dc]" /></RoundButton>
        </div>
        <div className="flex items-center gap-[3px]">
          <RoundButton name="Characters"><Person className="size-[26px]" color="#d13a78" /></RoundButton>
          <RoundButton name="Items"><GiBarrel className="size-7 text-[#ef8d3e]" /></RoundButton>
          <RoundButton name="Scenery"><TreeIcon className="h-[26px] w-[22px]" color="#5da04e" /></RoundButton>
          <RoundButton name="Volumes"><WireCube color="#3b86bd" /></RoundButton>
          <RoundButton name="Decals"><Decal letter="#e04b45" color="#d8403a" /></RoundButton>
          <RoundButton name="Probes"><Svg box="0 0 26 26" className="size-[26px]"><circle cx="13" cy="12" r="11" fill="#7fb4c0" stroke="#b6f3fb" strokeWidth="2" /><circle cx="9" cy="8" r="5" fill="#e4f6fa" /><path d="M11 23h4v3h-4z" fill="#aaa" /></Svg></RoundButton>
          <RoundButton name="Fog"><span className="size-[26px] rounded-full bg-radial-[at_60%_35%] from-[#2b0d33] via-[#7a4a80] to-[#6b5570]" /></RoundButton>
          <RoundButton name="Lights"><Bulb className="h-[26px] w-5" color="#f3df5e" /></RoundButton>
          <RoundButton name="Light probes"><Bulb className="h-[26px] w-5" color="#a57ea3" star /></RoundButton>
          <RoundButton name="Splines"><Curve /></RoundButton>
          <span className="flex-1" />
          <RoundButton name="Local"><Letter c="L" className="bg-[#6aa355]" /></RoundButton>
          <RoundButton name="Global"><Letter c="G" className="bg-[#8b4fc8]" /></RoundButton>
          <RoundButton name="Other" bare><Letter c="O" className="bg-[#f29350]" /></RoundButton>
        </div>
      </div>
      <div className="mx-[3px] mt-0.5 flex h-10 shrink-0 items-center bg-[#484848] pl-[3px]">
        <button className="flex items-center gap-1">Options<Down className="h-1.5 w-2.5 text-white" /></button>
        <Bar className="ml-[3px] h-[26px] w-0.5 bg-[#e4e4e4]" /><span className="ml-2 flex-1">Objects</span>
        <Bar className="h-[26px] w-0.5 bg-[#e4e4e4]" /><span className="w-[83px] pl-2">Extra</span>
      </div>
      <div className="mx-0.5 flex min-h-0 flex-1 flex-col overflow-hidden bg-[repeating-linear-gradient(to_bottom,#3a3a3a_0,#3a3a3a_30px,#333_30px,#333_60px)] text-base text-[#c8c8c8]">
        <div className="flex h-[31px] shrink-0 items-center pt-1.5 pl-[91px]"><Down className="h-2 w-3 text-white" /><Svg box="0 0 23 23" className="ml-4 size-[23px]"><path d="M3 3l11 12" stroke="#f5b60f" strokeWidth="4" strokeLinecap="round" /><path d="M11 20c0-7 4-9 11-8 0 7-8 12-11 8z" fill="#f5b60f" stroke="#a87400" /></Svg><b className="ml-0.5 text-[#5ecb2a]">WLD_Crashsite_D</b></div>
        <div className="relative flex h-[30px] shrink-0 items-center pt-1.5 pl-[59px]"><span className="size-[21px] rounded-sm bg-[#20702a]" /><span className="mb-3 ml-4 h-5 w-5 border-b border-l border-[#777]" /><Down className="ml-1 h-2 w-3 text-white" /><Svg box="0 0 27 21" className="ml-3 h-[21px] w-[27px]"><path d="M1 0h10l2 3h13v18H1z" fill="#a98c58" /><path d="M1 8h25v13H1z" fill="#e3c080" /></Svg><span className="ml-0.5">Scenery</span></div>
        <div className="flex h-[30px] shrink-0 items-center pt-1.5 pl-[127px]"><span className="mb-4 h-5 w-7 border-b border-l border-[#777]" /><TreeIcon className="ml-6 h-[23px] w-[19px]" color="#5da04e" /><span className="ml-1.5 w-[236px] overflow-hidden whitespace-nowrap">DEC_GEN_Statue_Wizard_B_Brc</span><b className="mr-3 ml-auto text-2xl font-black text-[#f00]">?</b></div>
      </div>
      <div className="mx-[3px] mb-0.5 h-[27px] shrink-0 bg-[#494949]" />
    </section>
  );
}

function PreviewPanel() {
  return (
    <section className="mt-[19px] mb-3 flex h-[359px] shrink-0 flex-col">
      <TitleBar title="Preview" />
      <div className="flex h-[33px] shrink-0 items-center pt-px pl-1 text-lg">
        <Grip /><button className="ml-3">Options</button><button className="ml-5 text-base">&lt; &lt;</button><button className="ml-[18px]">Rotate</button><button className="ml-[18px] text-base">&gt; &gt;</button>
        <div className="ml-2 flex">
          {Array.from({ length: 10 }, (_, i) => (
            <button key={i} aria-label={`Shading mode ${i + 1}`} className={`relative grid h-7 w-[23px] place-items-center border ${i ? "border-transparent" : "border-white"}`}>
              <Svg box="0 0 14 14" className="size-3.5">
                <path d="M0 3l7-3 7 3-7 3z" fill={i === 4 || i === 5 ? "#333" : "#bbb"} /><path d="M0 3v8l7 3V6z" fill={i > 0 && i < 6 ? "#6a7378" : "#9c9c9c"} /><path d="M14 3v8l-7 3V6z" fill={i > 0 && i < 6 ? "#4b565c" : "#787878"} />
                {i > 0 && i < 6 && <path d="M3 4v8M10 5v8M1 7l6 3 6-3" stroke="#a0a8ac" strokeWidth=".8" />}
              </Svg>
              {(i === 2 || i === 4) && <b className="absolute bottom-0.5 left-0.5 text-xs leading-none text-white">A</b>}
            </button>
          ))}
        </div>
        <Overflow className="mr-1 mb-1 ml-auto" />
      </div>
      <div className="relative min-h-0 flex-1 overflow-hidden bg-[#b0b8c8]">
        <svg viewBox="42 219 1513 893" preserveAspectRatio="xMidYMid slice" className="size-full" fill="none">
          <GridLine d="M42 277h1513M395 401h808M358 439h882M300 490h1000M232 552h1136M143 634h1312M42 748h1513M42 916h1513M799 219v893M42 376l306-139M1555 376l-305-139" />
          {[1, 2, 3, 4, 5].map((k) => <GridLine key={k} d={`M${799 - k * 81} 401L${799 - k * 235} 1112M${799 + k * 81} 401L${799 + k * 235} 1112`} />)}
          <g transform="translate(799 376) scale(.947) translate(-841 -460)"><Statue /></g>
        </svg>
        <p className="absolute top-0 left-0 h-5 w-[403px] bg-[#696969] pl-1 font-['Liberation_Sans',sans-serif] leading-5 whitespace-pre text-[#cfcfcf]">{"Visual  -  Triangle Count: 5874  |  Vertex Count: 3824"}</p>
      </div>
    </section>
  );
}

export default function App() {
  return (
    <div className="flex h-screen min-w-[1900px] flex-col overflow-hidden bg-[#494949] font-['Open_Sans','Noto_Sans_CJK_KR',sans-serif] text-[17px] leading-6 text-[#ececec]">
      <nav className="flex h-[30px] shrink-0 items-center pl-[9px]">
        {MENU.map(([m, w]) => <button key={m} className={`text-left ${w}`}>{m}</button>)}
      </nav>
      <Toolbar />
      <main className="flex min-h-0 flex-1">
        <Sidebar />
        <div className="ml-[13px] flex min-w-0 flex-1 flex-col"><ResourceManager /><RootTemplates /></div>
        <div className="mt-[3px] mr-0.5 ml-3 flex w-[504px] shrink-0 flex-col"><Outliner /><PreviewPanel /></div>
      </main>
    </div>
  );
}
